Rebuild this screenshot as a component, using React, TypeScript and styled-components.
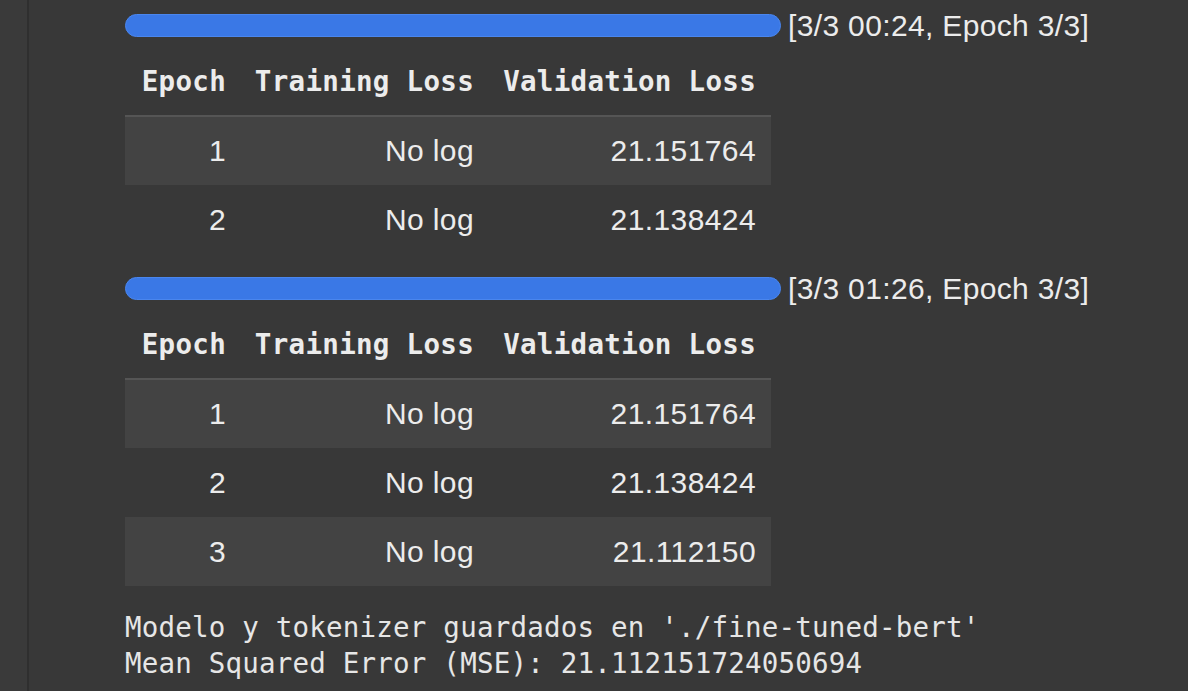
import React from "react";
import styled, { createGlobalStyle } from "styled-components";

const Global = createGlobalStyle`
  html, body { margin: 0; padding: 0; background: #ffffff; }
  body { width: 1192px; height: 696px; overflow: hidden; }
`;

const Page = styled.div`
  width: 1188px;
  height: 691px;
  background: #383838;
  display: flex;
  overflow: hidden;
`;

const Gutter = styled.div`
  width: 27px;
  flex: none;
  background: #3a3a3a;
  border-right: 2px solid #2f2f2f;
`;

const Content = styled.div`
  flex: 1;
  padding: 14px 0 0 96px;
  display: flex;
  flex-direction: column;
`;

const ProgressRow = styled.div<{ $top: number }>`
  display: flex;
  align-items: center;
  height: 23px;
  margin-top: ${(p) => p.$top}px;
`;

const Bar = styled.div`
  width: 656px;
  height: 23px;
  box-sizing: border-box;
  border-radius: 12px;
  background: #3a78e6;
  border: 1px solid #4a86ee;
  flex: none;
`;

const ProgressText = styled.span`
  margin-left: 7px;
  font-family: "Liberation Sans", Arial, sans-serif;
  font-size: 30px;
  line-height: 23px;
  color: #ececec;
  white-space: nowrap;
  letter-spacing: 0.35px;
`;

const Table = styled.table`
  border-collapse: collapse;
  margin-top: 10px;
  table-layout: fixed;
  width: 646px;
`;

const HeadCell = styled.th<{ $w: number }>`
  width: ${(p) => p.$w}px;
  height: 69px;
  padding: 0 15px 0 0;
  text-align: right;
  font-family: "DejaVu Sans Mono", "Liberation Mono", monospace;
  font-weight: bold;
  font-size: 27.5px;
  letter-spacing: 0.3px;
  color: #ececec;
  border-bottom: 2px solid #555555;
  white-space: nowrap;
  box-sizing: border-box;
`;

const Row = styled.tr<{ $striped: boolean }>`
  background: ${(p) => (p.$striped ? "#434343" : "transparent")};
`;

const Cell = styled.td`
  height: 69px;
  padding: 0 15px 0 0;
  text-align: right;
  font-family: "Liberation Sans", Arial, sans-serif;
  font-size: 30px;
  color: #ececec;
  letter-spacing: 0.4px;
  white-space: nowrap;
  box-sizing: border-box;
`;

const Output = styled.pre`
  margin: 23px 0 0 0;
  font-family: "DejaVu Sans Mono", "Liberation Mono", monospace;
  font-size: 27.5px;
  line-height: 36px;
  letter-spacing: 0.2px;
  color: #e6e6e6;
`;

type Epoch = { epoch: number; train: string; val: string };

const Block: React.FC<{ top: number; label: string; rows: Epoch[] }> = ({ top, label, rows }) => (
  <>
    <ProgressRow $top={top}>
      <Bar />
      <ProgressText>{label}</ProgressText>
    </ProgressRow>
    <Table>
      <thead>
        <tr>
          <HeadCell $w={116}>Epoch</HeadCell>
          <HeadCell $w={248}>Training Loss</HeadCell>
          <HeadCell $w={282}>Validation Loss</HeadCell>
        </tr>
      </thead>
      <tbody>
        {rows.map((r, i) => (
          <Row key={r.epoch} $striped={i % 2 === 0}>
            <Cell>{r.epoch}</Cell>
            <Cell>{r.train}</Cell>
            <Cell>{r.val}</Cell>
          </Row>
        ))}
      </tbody>
    </Table>
  </>
);

export default function App() {
  const first: Epoch[] = [
    { epoch: 1, train: "No log", val: "21.151764" },
    { epoch: 2, train: "No log", val: "21.138424" },
  ];
  const second: Epoch[] = [
    ...first,
    { epoch: 3, train: "No log", val: "21.112150" },
  ];
  return (
    <>
      <Global />
      <Page>
        <Gutter />
        <Content>
          <Block top={0} label="[3/3 00:24, Epoch 3/3]" rows={first} />
          <Block top={23} label="[3/3 01:26, Epoch 3/3]" rows={second} />
          <Output>
            {"Modelo y tokenizer guardados en './fine-tuned-bert'\nMean Squared Error (MSE): 21.112151724050694"}
          </Output>
        </Content>
      </Page>
    </>
  );
}
